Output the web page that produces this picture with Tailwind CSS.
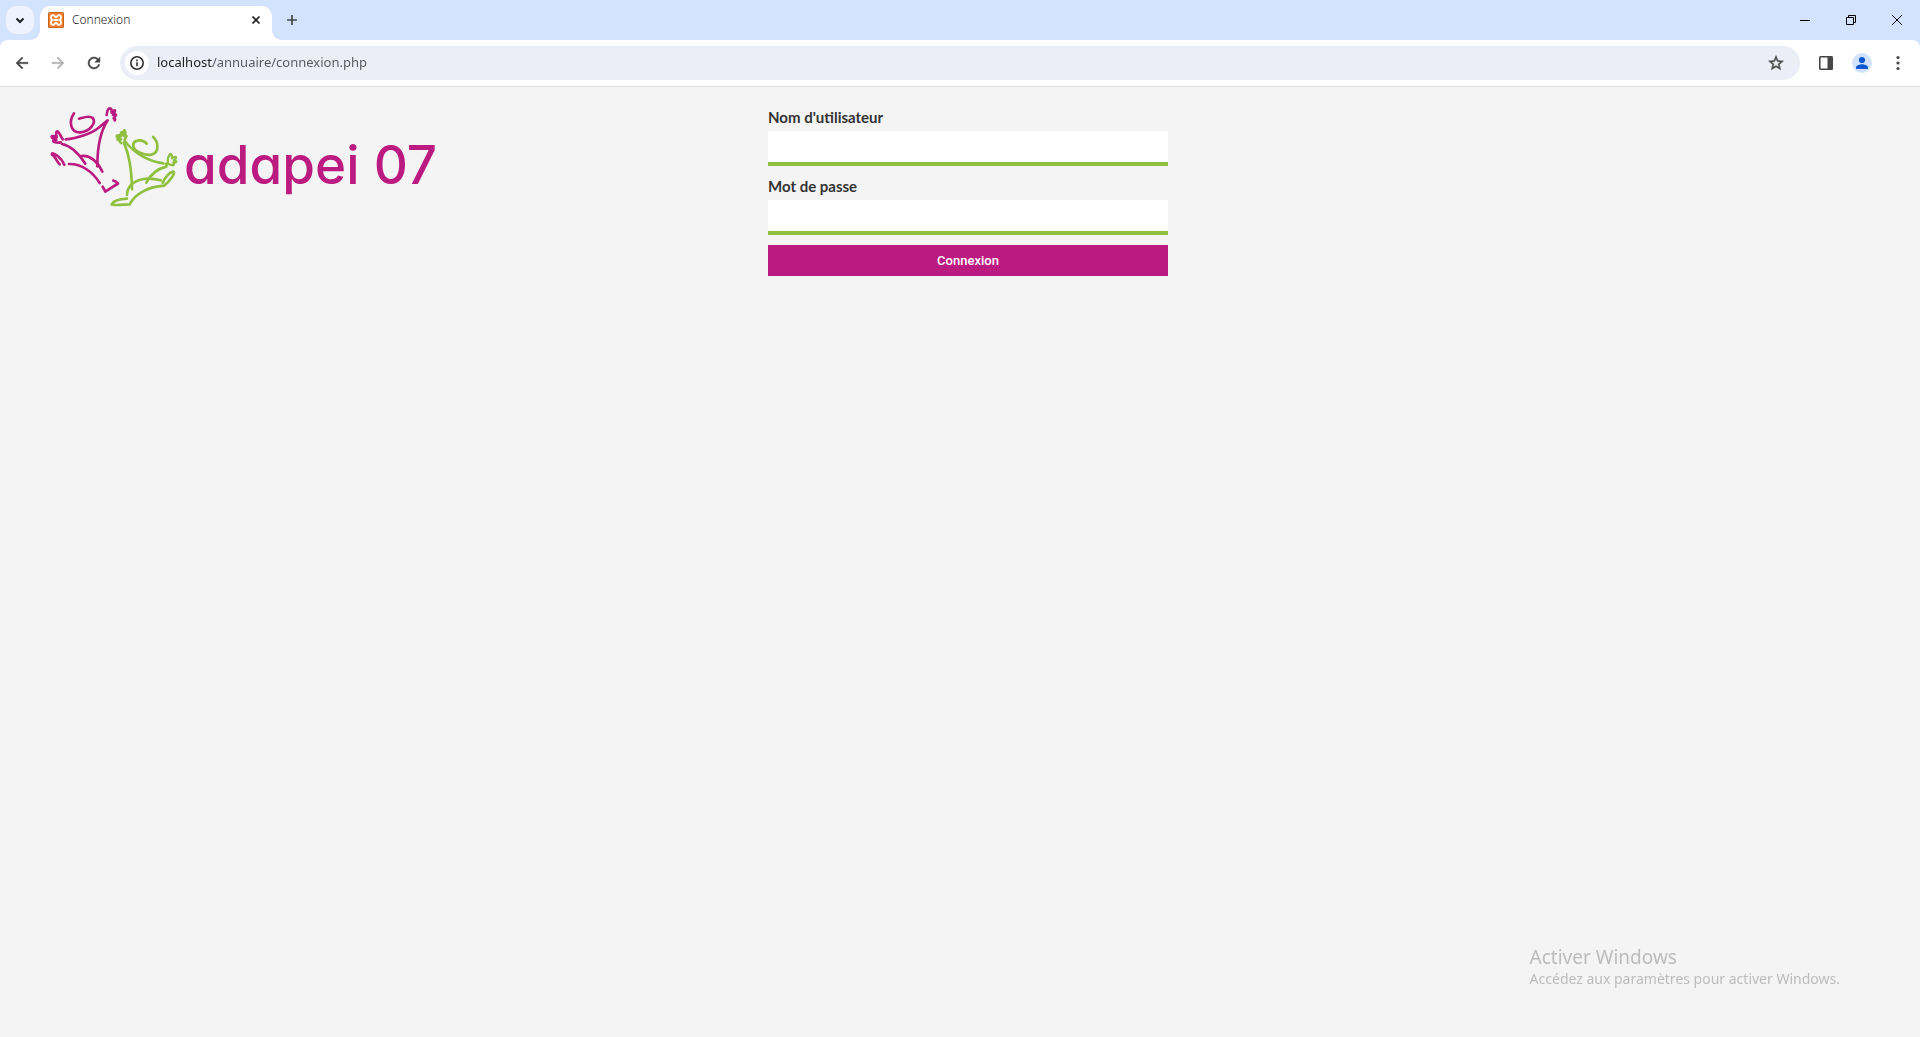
<!DOCTYPE html>
<html lang="fr">
  <head>
    <meta charset="UTF-8" />
    <meta name="viewport" content="width=device-width, initial-scale=1.0" />
    <title>Connexion</title>
    <script src="https://cdn.jsdelivr.net/npm/@tailwindcss/browser@4"></script>
  </head>

  <body class="flex min-h-screen flex-col bg-[#f4f4f4] font-['Noto_Sans',sans-serif]">
    <!-- Tab strip -->
    <div class="bg-[#d3e3fd]">
      <div class="flex h-10 items-end">
        <button class="z-10 mx-1.5 mb-1.5 flex size-7 items-center justify-center rounded-[10px] bg-[#ecf3fe]" aria-label="Rechercher dans les onglets">
          <svg class="size-4" viewBox="0 0 16 16" fill="none" stroke="#1f1f1f" stroke-width="2"><path d="M4.500 6.500 8 10l3.500-3.500" /></svg>
        </button>
        <div class="relative flex h-[34px] w-[232px] items-center rounded-t-[10px] bg-white px-2 pb-1.5">
          <span class="absolute bottom-0 -left-2.5 size-2.5 bg-[radial-gradient(circle_at_0_0,transparent_10px,#fff_10px)]"></span>
          <span class="absolute -right-2.5 bottom-0 size-2.5 bg-[radial-gradient(circle_at_100%_0,transparent_10px,#fff_10px)]"></span>
          <svg class="mr-2 size-4" viewBox="0 0 16 16" fill="none">
            <rect width="16" height="16" rx="1.500" fill="#c96418" />
            <rect x="1" y="1" width="14" height="14" rx="1" fill="#f58233" />
            <path d="M5 3.200C2.500 3.200 2.500 6.500 4 8c-1.500 1.500-1.500 4.800 1 4.800 2 0 1.500-2 3-2s1 2 3 2c2.500 0 2.500-3.300 1-4.800 1.500-1.500 1.500-4.800-1-4.800-2 0-1.500 2-3 2s-1-2-3-2ZM5.500 8h5" stroke="#fff" stroke-width="1.800" />
          </svg>
          <span class="flex-1 text-xs text-[#1f1f1f] font-light">Connexion</span>
          <button class="flex size-4 items-center justify-center" aria-label="Fermer l'onglet">
            <svg class="size-2.5" viewBox="0 0 10 10" stroke="#1f1f1f" stroke-width="1.700"><path d="m1.500 1.500 7 7m0-7-7 7" /></svg>
          </button>
        </div>
        <button class="ml-1.5 mb-1.5 flex size-7 items-center justify-center" aria-label="Nouvel onglet">
          <svg class="size-3" viewBox="0 0 12 12" stroke="#474747" stroke-width="1.700"><path d="M6 1v10M1 6h10" /></svg>
        </button>
        <div class="ml-auto flex h-10">
          <button class="flex w-[46px] items-center justify-center" aria-label="Réduire">
            <svg class="size-3" viewBox="0 0 12 12" stroke="#000"><path d="M1 6.500h10" /></svg>
          </button>
          <button class="flex w-[46px] items-center justify-center" aria-label="Niveau inférieur">
            <svg class="size-3" viewBox="0 0 12 12" fill="none" stroke="#000"><path d="M1.500 3.500h7v7h-7zM3.500 3.500v-2h7v7h-2" /></svg>
          </button>
          <button class="flex w-[46px] items-center justify-center" aria-label="Fermer">
            <svg class="size-3" viewBox="0 0 12 12" stroke="#000"><path d="m1 1 10 10m0-10L1 11" /></svg>
          </button>
        </div>
      </div>

      <!-- Toolbar -->
      <div class="flex h-[47px] items-center rounded-t-lg border-b border-[#dcdcdc] bg-white px-1">
        <button class="flex size-9 items-center justify-center" aria-label="Retour">
          <svg class="size-[18px]" viewBox="0 0 24 24" fill="#474747" stroke="#474747" stroke-width=".6"><path d="M20 11H7.830l5.590-5.590L12 4l-8 8 8 8 1.410-1.410L7.830 13H20v-2z" /></svg>
        </button>
        <button class="flex size-9 items-center justify-center" aria-label="Avancer">
          <svg class="size-[18px]" viewBox="0 0 24 24" fill="#b0b0b0" stroke="#b0b0b0" stroke-width=".6"><path d="m12 4-1.410 1.410L16.170 11H4v2h12.170l-5.580 5.590L12 20l8-8z" /></svg>
        </button>
        <button class="flex size-9 items-center justify-center" aria-label="Actualiser">
          <svg class="size-[18px]" viewBox="0 0 24 24" fill="#474747" stroke="#474747" stroke-width=".6"><path d="M17.650 6.350C16.200 4.900 14.210 4 12 4c-4.420 0-7.990 3.580-7.990 8s3.570 8 7.990 8c3.730 0 6.840-2.550 7.730-6h-2.080c-.820 2.330-3.040 4-5.650 4-3.310 0-6-2.690-6-6s2.690-6 6-6c1.660 0 3.140.690 4.220 1.780L13 11h7V4l-2.350 2.350z" /></svg>
        </button>
        <div class="mx-2 flex h-[34px] flex-1 items-center rounded-full bg-[#ebeef7] pl-[5px] pr-3.5">
          <button class="mr-2 flex size-6 items-center justify-center rounded-full bg-white" aria-label="Informations sur le site">
            <svg class="size-4" viewBox="0 0 16 16" fill="none" stroke="#303030" stroke-width="1.600"><circle cx="8" cy="8" r="6.200" /><path d="M8 7.200v4.100M8 4.600v1.700" /></svg>
          </button>
          <input
            class="min-w-0 flex-1 bg-[linear-gradient(90deg,#1f1f1f_55px,#55585e_55px)] bg-clip-text text-[13px] text-transparent outline-none"
            type="text"
            aria-label="Adresse"
            value="localhost/annuaire/connexion.php"
          />
          <button class="flex size-5 items-center justify-center" aria-label="Ajouter aux favoris">
            <svg class="size-[18px]" viewBox="0 0 24 24" fill="#474747" stroke="#474747" stroke-width=".6"><path d="m22 9.240-7.190-.620L12 2 9.190 8.630 2 9.240l5.460 4.730L5.820 21 12 17.270 18.180 21l-1.630-7.030L22 9.240zM12 15.400l-3.760 2.270 1-4.280-3.320-2.880 4.380-.380L12 6.100l1.710 4.040 4.380.380-3.320 2.880 1 4.280L12 15.400z" /></svg>
          </button>
        </div>
        <button class="flex size-9 items-center justify-center" aria-label="Panneau latéral">
          <svg class="size-4" viewBox="0 0 16 16"><rect x="1.800" y="1.800" width="12.400" height="12.400" rx=".8" fill="none" stroke="#474747" stroke-width="1.600" /><path d="M9.500 1.500h5v13h-5z" fill="#474747" /></svg>
        </button>
        <button class="flex size-9 items-center justify-center" aria-label="Profil">
          <svg class="size-5" viewBox="0 0 20 20" fill="#0b57d0"><circle cx="10" cy="10" r="10" fill="#d3e3fd" /><circle cx="10" cy="7" r="3.100" /><path d="M4 16v-1.500c0-2.200 4-3.200 6-3.200s6 1 6 3.200V16z" /></svg>
        </button>
        <button class="flex size-9 items-center justify-center" aria-label="Menu">
          <svg class="size-4" viewBox="0 0 16 16" fill="#474747"><circle cx="8" cy="2.500" r="1.600" /><circle cx="8" cy="8" r="1.600" /><circle cx="8" cy="13.500" r="1.600" /></svg>
        </button>
      </div>
    </div>

    <!-- Page -->
    <main class="grid grid-cols-[2fr_3fr]">
      <a class="flex pt-[18px] pl-[50px]" href="#" aria-label="adapei 07">
        <svg class="h-[104px] w-[130px] shrink-0" viewBox="30 30 390 312" fill="none" stroke-width="8" stroke-linecap="round" stroke-linejoin="round">
          <g stroke="#bb1b80">
            <path d="M102 55C84 82 93 114 121 112c31-2 48-31 37-43-8-9-27-2-41 2" />
            <path d="M77 133c36-2 79-19 98-34l28-23c-20 30-31 67-31 138" />
            <path d="M200 60c1-12 5-20 10-20 6 1 5 8 5 13 4-6 9-9 10-6 1 4-4 9-6 13 5-3 9-3 9 0s-5 7-7 10c4 0 6 2 3 6" />
            <path d="M62 142c-11 2-24-1-22-5 2-3 6-2 9-3-7-2-15-6-14-9 2-4 10 0 15 2-2-8-3-17 2-18 6 2 9 14 16 24" />
            <path d="M66 147c27 5 49 27 70 59M120 184c30-8 54 19 67 46" />
            <path d="M59 208c-9-8-13-25-23-29-3-7 7-4 17 4 9 7 16 17 20 26" />
            <path d="M87 207c37-1 72 24 92 57M188 275l8 15c13-7 27-19 38-24-3-4-8-8-14-9" />
          </g>
          <g stroke="#8fc040">
            <path d="M251 143c20 41 24 88 25 140" />
            <path d="M254 138c29 36 67 60 116 67" />
            <path d="M320 146c-14-16-43-11-40 7 3 17 31 29 54 26 27-6 20-41 5-53" />
            <path d="M243 144c-6-5-5-10 0-11-7 3-12 2-10-2l7-5c-8 1-12-1-9-4 4-3 9 0 13 1-2-8-2-12 2-11l4 8c0-9 1-15 4-14 3 3 2 13 0 18 3-3 6-3 5 1l-5 8" />
            <path d="M377 207l3 4M384 199c-2-7 2-18 7-22 4 1 5 7 5 13 4-4 9-5 12-3 1 3-3 6-6 9 4 1 7 2 7 4-1 3-6 3-9 3 3 3 2 8-1 8-7-1-13-4-18-7" stroke-width="7" />
            <path d="M379 215c-29 7-48 25-60 48" />
            <path d="M261 300c1-28 18-42 50-48 18-3 37 0 51 4" />
            <path d="M368 263c6-15 20-31 31-33 11 0-9 29-27 42-46 3-87 24-103 56-23 1-48 4-54 0 6-11 27-16 46-17" />
          </g>
        </svg>
        <!-- cv11 switches Inter to the single-storey a -->
        <span class="mt-7 ml-1 text-[53px]/[64px] font-medium whitespace-nowrap text-[#bb1b80] font-['Inter',sans-serif] [font-feature-settings:'cv11']">adapei 07</span>
      </a>

      <form class="flex w-[400px] flex-col pt-5 font-['Lato',sans-serif] text-[#333]">
        <label class="h-6 text-[15px]/[20px] font-bold" for="username">Nom d'utilisateur</label>
        <input class="mb-2.5 h-[35px] border-b-4 border-[#8fc040] bg-white px-2 outline-none" type="text" id="username" name="username" />
        <label class="h-6 text-[15px]/[20px] font-bold" for="password">Mot de passe</label>
        <input class="mb-2.5 h-[35px] border-b-4 border-[#8fc040] bg-white px-2 outline-none" type="password" id="password" name="password" />
        <button class="h-[31px] bg-[#bb1b80] text-[13px] font-medium text-white font-['Roboto',sans-serif]" type="submit">Connexion</button>
      </form>
    </main>

    <!-- Windows activation notice, floats over the page -->
    <div class="pointer-events-none fixed right-20 bottom-12 text-[#bcbcbc]">
      <p class="text-[19px]/[24px]">Activer Windows</p>
      <p class="text-sm/5">Accédez aux paramètres pour activer Windows.</p>
    </div>
  </body>
</html>
